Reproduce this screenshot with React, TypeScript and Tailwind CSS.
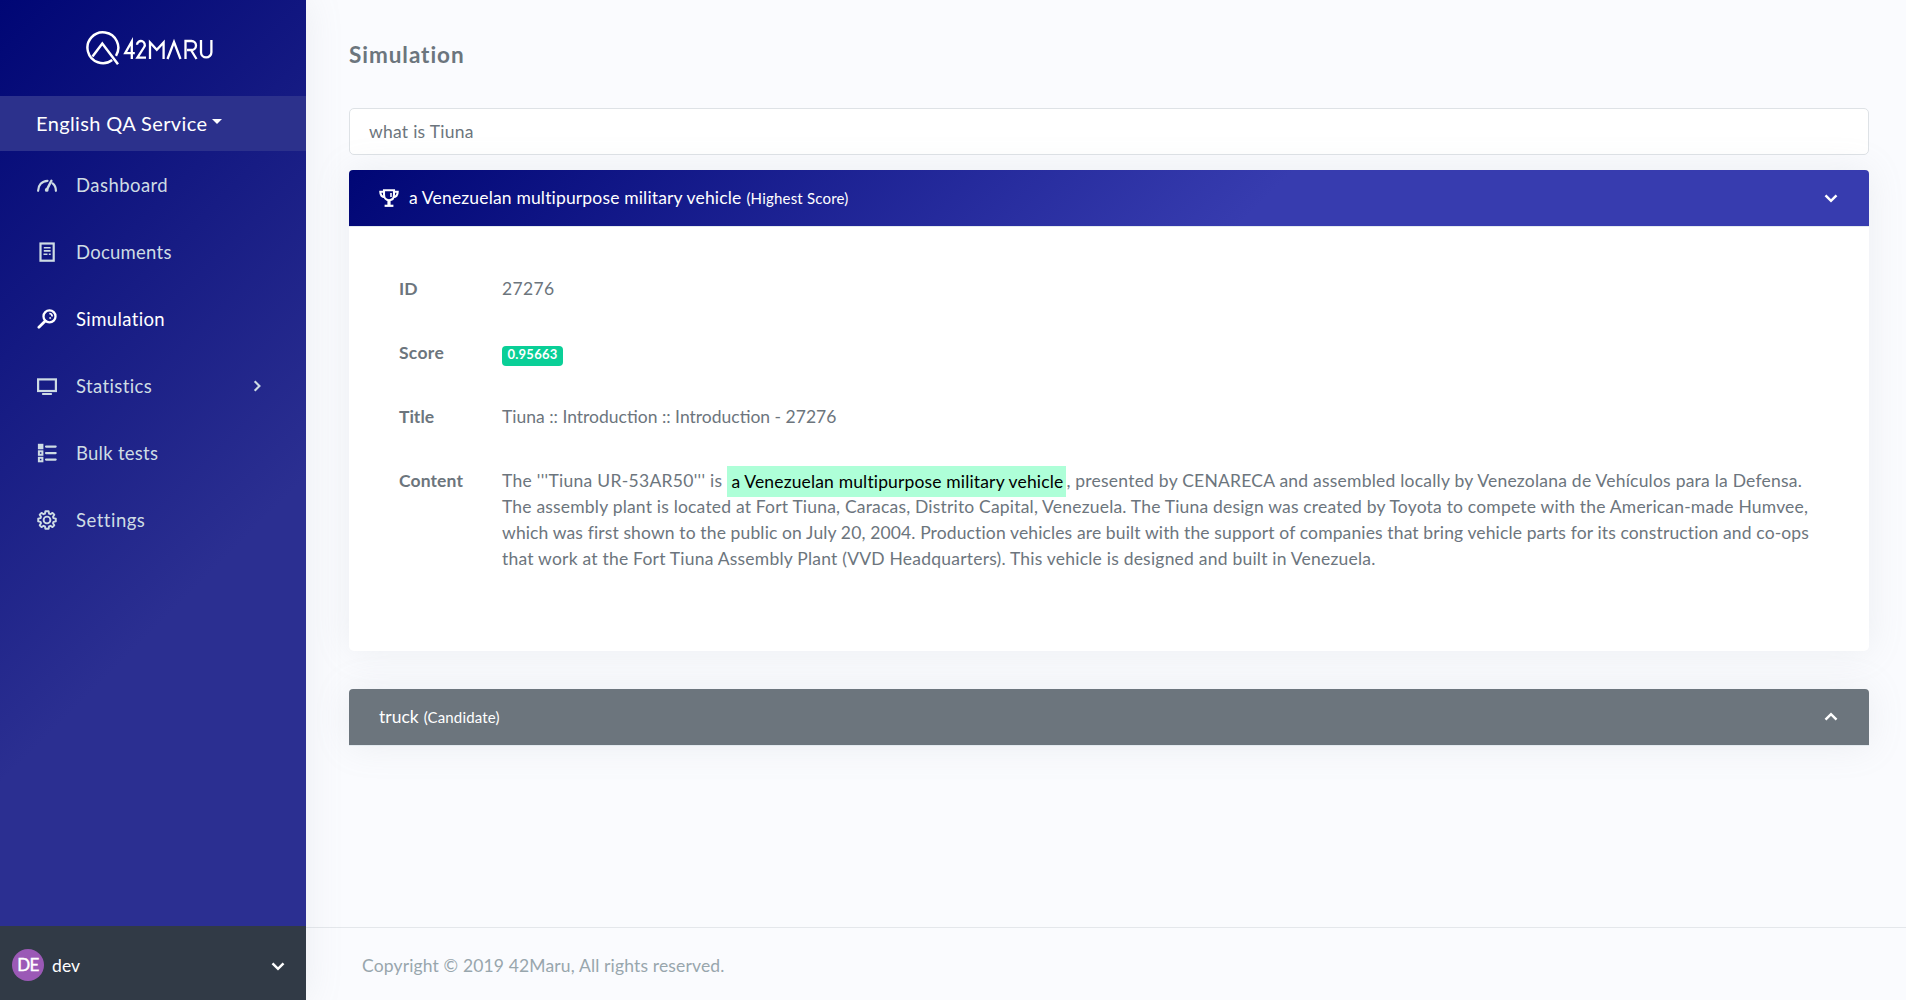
import React from "react";

type IconProps = { className?: string };

function Logo() {
  return (
    <svg width="130" height="36" viewBox="0 0 130 36" fill="none" stroke="#fff" strokeWidth="2.3" strokeLinejoin="miter">
      <path d="M27.200 29A15.400 15.400 0 1 1 31 24.800" strokeWidth="2.500" />
      <path d="M7.500 25.500 17.300 12.600 33 33.200" strokeWidth="2.500" />
      <path d="M46.800 28V10.500L40.200 22.200H49.800" />
      <path d="M52 13.800a3.900 3.900 0 1 1 7.200 2.200L52.400 26.700H61" />
      <path d="M65 28V11.500L71.800 18.800 78.600 11.500V28" />
      <path d="M82.500 28 89 11 95.500 28" />
      <path d="M100.500 28V10H106.500a4.500 4.500 0 0 1 0 9H102M106 19 111.500 28" />
      <path d="M116 9V21.200a5.200 5.200 0 0 0 10.400 0V9" />
    </svg>
  );
}

function Meter({ className }: IconProps) {
  return (
    <svg className={className} width="20" height="20" viewBox="0 0 20 20" fill="none" stroke="currentColor" strokeWidth="2.200" strokeLinecap="round">
      <path d="M1.100 15.800C1.100 10 4.800 6 10.500 5.800M15.600 8.300C17.900 10 18.900 12.400 18.900 15.800" />
      <path d="M9.800 14.800 14.400 5.800" strokeWidth="2.500" />
      <circle cx="9.700" cy="14.900" r="1.900" fill="currentColor" stroke="none" />
    </svg>
  );
}

function DocumentIcon({ className }: IconProps) {
  return (
    <svg className={className} width="20" height="20" viewBox="0 0 20 20" fill="none" stroke="currentColor" strokeWidth="2.200">
      <rect x="3.500" y="1.500" width="13.200" height="17.200" />
      <path d="M6.800 5.700H13.600M6.800 8.900H13.600M6.500 12.300H10.500M11.800 12.300H13.700" strokeWidth="1.600" />
    </svg>
  );
}

function SearchIcon({ className }: IconProps) {
  return (
    <svg className={className} width="20" height="20" viewBox="0 0 20 20" fill="none" stroke="currentColor" strokeWidth="2.300">
      <circle cx="12.500" cy="7.400" r="6" />
      <path d="M1.900 18.200 8.200 11.900" strokeWidth="2.800" strokeLinecap="round" />
      <path d="M12.300 4.500A3.100 3.100 0 0 1 15.200 7.500M12.300 9h1.800" strokeWidth="1.700" />
    </svg>
  );
}

function MonitorIcon({ className }: IconProps) {
  return (
    <svg className={className} width="20" height="20" viewBox="0 0 20 20" fill="none" stroke="currentColor" strokeWidth="2.200">
      <rect x="1.100" y="3.400" width="17.800" height="11.600" />
      <path d="M5.900 17.900H14.100" strokeWidth="2" strokeLinecap="round" />
    </svg>
  );
}

function ListIcon({ className }: IconProps) {
  return (
    <svg className={className} width="20" height="20" viewBox="0 0 20 20" fill="none" stroke="currentColor" strokeWidth="2">
      <rect x="1.900" y="1.800" width="3.500" height="3.500" fill="currentColor" />
      <rect x="1.900" y="8.300" width="3.500" height="3.500" />
      <rect x="1.900" y="14.800" width="3.500" height="3.500" />
      <path d="M9 3.600H18.700M9 10.100H18.700M9 16.600H18.700" strokeWidth="2.100" strokeLinecap="round" />
    </svg>
  );
}

function GearIcon({ className }: IconProps) {
  return (
    <svg className={className} width="20" height="20" viewBox="0 0 20 20" fill="none" stroke="currentColor" strokeWidth="1.900" strokeLinejoin="round">
      <circle cx="10" cy="10" r="3.400" />
      <path d="M8.400 1.300h3.200l.5 2.400 1.300.5 2.100-1.300 1.800 1.800-1.300 2.100.5 1.300 2.300.5v2.800l-2.300.5-.5 1.300 1.300 2.100-1.800 1.800-2.100-1.300-1.300.5-.5 2.400H8.400l-.5-2.400-1.300-.5-2.100 1.300-1.800-1.800L4 13.200l-.5-1.300-2.300-.5V8.600l2.300-.5L4 6.800 2.700 4.700l1.800-1.800 2.100 1.300 1.300-.5z" />
    </svg>
  );
}

function Trophy() {
  return (
    <svg width="20" height="18" viewBox="0 0 20 18" fill="none" stroke="#fff" strokeWidth="2.100">
      <path d="M5 1.300H15V5.500C15 9 13 11.200 10 11.200S5 9 5 5.500Z" />
      <path d="M5 2.800H1.300C1.300 6 2.800 8 6 8.300M15 2.800H18.700C18.700 6 17.200 8 14 8.300" />
      <path d="M10 11V16" strokeWidth="3.200" />
      <path d="M5.600 16.800H14.400" strokeWidth="2.200" />
      <path d="M12 4V8" strokeWidth="1.600" />
    </svg>
  );
}

function Chevron({ className }: IconProps) {
  return (
    <svg className={className} width="14" height="14" viewBox="0 0 14 14" fill="none" stroke="currentColor" strokeWidth="2.500">
      <path d="M1.500 4.300 7 9.800 12.500 4.300" />
    </svg>
  );
}

const NAV = [
  { label: "Dashboard", Icon: Meter, tracking: "tracking-[0.45px]" },
  { label: "Documents", Icon: DocumentIcon, tracking: "tracking-[0.25px]" },
  { label: "Simulation", Icon: SearchIcon, tracking: "tracking-[0.38px]", active: true },
  { label: "Statistics", Icon: MonitorIcon, tracking: "tracking-[0.38px]", expandable: true },
  { label: "Bulk tests", Icon: ListIcon, tracking: "tracking-[0.26px]" },
  { label: "Settings", Icon: GearIcon, tracking: "tracking-[0.5px]" },
];

function Sidebar() {
  return (
    <aside className="z-10 flex w-[306px] shrink-0 flex-col bg-[linear-gradient(135deg,#000675_0%,#2b2f91_60%)] shadow-[0_0_35px_0_rgba(154,161,171,0.15)]">
      <div className="flex h-24 items-center pt-px pl-[85px]">
        <Logo />
      </div>
      <button className="flex h-[55px] items-center gap-[5px] bg-[#2c318c] pb-[2px] pl-9 text-[20px] tracking-[0.38px] text-white">
        English QA Service
        <span className="-mt-[2px] border-x-[5px] border-t-[5px] border-x-transparent border-t-white" />
      </button>
      <nav className="flex flex-col">
        {NAV.map(({ label, Icon, tracking, active, expandable }) => (
          <a key={label} className={`flex h-[67px] items-center pl-[37px] pr-[43px] text-[18.5px] ${active ? "text-white" : "text-[#cedce4]"}`}>
            <Icon className="mr-[19px]" />
            <span className={`${tracking} grow`}>{label}</span>
            {expandable && <Chevron className="h-3 w-3 -rotate-90" />}
          </a>
        ))}
      </nav>
      <div className="mt-auto flex h-[74px] items-center bg-[#313a46] pr-[21px] pl-3 pt-1 text-white">
        <span className="flex h-8 w-8 items-center justify-center rounded-full bg-[#9b59b6] text-[17px] tracking-[-0.5px] [-webkit-text-stroke:0.4px_white]">DE</span>
        <span className="ml-2 grow pt-[2px] text-[17.5px] tracking-[0.1px]">dev</span>
        <Chevron className="mt-[2px]" />
      </div>
    </aside>
  );
}

function Row({ label, tracking, children }: { label: string; tracking?: string; children: React.ReactNode }) {
  return (
    <div className="flex">
      <div className={`w-[103px] shrink-0 font-bold ${tracking ?? ""}`}>{label}</div>
      <div className="whitespace-nowrap">{children}</div>
    </div>
  );
}

export default function App() {
  return (
    <div className="flex h-[1000px] w-full overflow-hidden bg-[#fafbfe] font-['Lato',sans-serif] text-[17.5px] leading-[26px] text-[#6c757d]">
      <Sidebar />
      <div className="flex min-w-0 grow flex-col">
        <main className="flex grow flex-col pr-[37px] pl-[43px]">
          <h1 className="flex h-[108px] items-center pt-[2px] text-[22.5px] font-bold tracking-[0.95px]">Simulation</h1>
          <div className="flex h-[47px] items-center rounded-[5px] border border-[#dee2e6] bg-white pl-[19px] tracking-[0.26px]">what is Tiuna</div>

          <section className="mt-[15px] h-[481px] rounded-[5px] bg-white shadow-[0_0_35px_0_rgba(154,161,171,0.15)]">
            <header className="flex h-[57px] items-center rounded-t-[4px] border-b border-[#e3eaef] bg-[linear-gradient(135deg,#000675_0%,#373caf_60%)] bg-clip-padding pr-[31px] pl-[30px] text-white">
              <Trophy />
              <span className="ml-[10px] tracking-[0.16px]">a Venezuelan multipurpose military vehicle</span>
              <small className="ml-[5px] grow text-[15px] tracking-[0.2px]">(Highest Score)</small>
              <Chevron />
            </header>
            <div className="flex flex-col gap-[38px] pt-[49px] pl-[50px]">
              <Row label="ID">
                <span className="tracking-[0.35px]">27276</span>
              </Row>
              <Row label="Score" tracking="tracking-[0.3px]">
                <span className="mt-[6px] flex h-5 w-[61px] justify-center rounded-[4px] bg-[#0acf97] text-[13px] leading-[17px] font-bold tracking-[0.24px] text-white">0.95663</span>
              </Row>
              <Row label="Title">Tiuna :: Introduction :: Introduction - 27276</Row>
              <Row label="Content" tracking="tracking-[0.11px]">
                <div className="flex h-[26px]">
                  <span className="tracking-[0.29px]">The '''Tiuna UR-53AR50''' is</span>
                  <mark className="-mt-[2px] ml-[5px] h-[31px] w-[339px] bg-[#aeffd8] pl-1 leading-[31px] tracking-[0.15px] text-black">a Venezuelan multipurpose military vehicle</mark>
                  <span className="tracking-[0.225px]">, presented by CENARECA and assembled locally by Venezolana de Vehículos para la Defensa.</span>
                </div>
                <div className="tracking-[0.19px]">The assembly plant is located at Fort Tiuna, Caracas, Distrito Capital, Venezuela. The Tiuna design was created by Toyota to compete with the American-made Humvee,</div>
                <div className="tracking-[0.13px]">which was first shown to the public on July 20, 2004. Production vehicles are built with the support of companies that bring vehicle parts for its construction and co-ops</div>
                <div className="tracking-[0.215px]">that work at the Fort Tiuna Assembly Plant (VVD Headquarters). This vehicle is designed and built in Venezuela.</div>
              </Row>
            </div>
          </section>

          <section className="mt-[38px] shadow-[0_0_35px_0_rgba(154,161,171,0.15)]">
            <header className="flex h-[57px] items-center rounded-t-[4px] border-b border-[#e3eaef] bg-[#6c757d] bg-clip-padding pr-[31px] pl-[30px] text-white">
              <span>truck</span>
              <small className="ml-[5px] grow text-[15px] tracking-[0.16px]">(Candidate)</small>
              <Chevron className="rotate-180" />
            </header>
          </section>
        </main>
        <footer className="flex h-[73px] items-center border-t border-[#e4e7eb] pt-[3px] pl-14 tracking-[0.15px] text-[#98a6ad]">
          Copyright © 2019 42Maru, All rights reserved.
        </footer>
      </div>
    </div>
  );
}
